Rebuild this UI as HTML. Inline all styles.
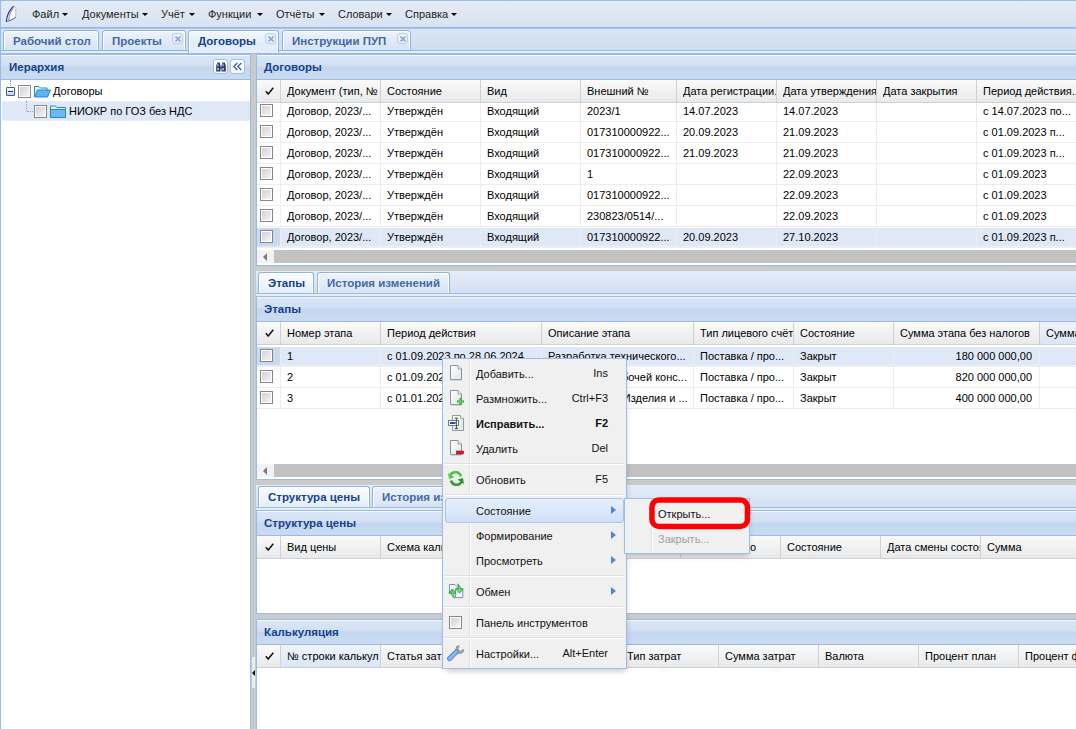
<!DOCTYPE html><html><head><meta charset="utf-8"><style>
*{box-sizing:border-box;margin:0;padding:0}
html,body{width:1076px;height:729px;overflow:hidden;background:#fff;font-family:"Liberation Sans",sans-serif;font-size:11px;color:#000}
div,span{position:absolute}
.t{white-space:nowrap;line-height:13px}
.mi{top:8px;color:#1e1e1e;line-height:13px;white-space:nowrap}
.dd{top:13px;width:0;height:0;border-left:3px solid transparent;border-right:3px solid transparent;border-top:3px solid #000}
.tab{border:1px solid #8db2e3;border-bottom:none;border-radius:3px 3px 0 0;background:linear-gradient(#eef3fa,#d6e3f3);box-shadow:inset 1px 1px 0 #fff,inset -1px 0 0 #fff}
.tt{font-weight:bold;color:#416aa3;font-size:11.5px;line-height:13px;white-space:nowrap}
.cls{width:11px;height:11px;border:1px solid #b9cfec;border-radius:3px;background:#e8f0fa}
.phdr{height:26px;background:linear-gradient(#dbe7f6 0,#d0dff3 11px,#c5d7ef 12px,#cadbf1 100%);border:1px solid #99bbe8;box-shadow:inset 0 1px 0 #f4f8fd}
.pt{font-weight:bold;color:#15428b;font-size:11.5px;line-height:13px;white-space:nowrap}
.ghdr{height:23px;background:linear-gradient(#fafafa,#e8e9eb);border-bottom:1px solid #d0d0d0}
.gc{top:0;height:22px;border-right:1px solid #d0d0d0;overflow:hidden}
.gcs{top:7px;left:7px;white-space:nowrap;line-height:13px}
.rl{height:1px;background:#ededed}
.vl{width:1px;background:#ededed}
.cb{width:13px;height:13px;border:1px solid #868686;background:linear-gradient(135deg,#caced6,#f8f8f9);box-shadow:inset 0 0 0 1px #fff}
.sel{background:#dfe8f6}
.sbar{height:13px;background:#c2c2c2}
.sbtn{width:17px;height:13px;background:#f3f3f3}
.tri{width:0;height:0;border-top:4px solid transparent;border-bottom:4px solid transparent;border-right:4px solid #7b7b7b}
.blue{background:#99bbe8}
.gray{background:#cacaca}
.mt{white-space:nowrap;line-height:13px;color:#111}
.sc{white-space:nowrap;line-height:13px;color:#111;text-align:right}
.msep{height:2px;border-top:1px solid #dcdcdc;border-bottom:1px solid #fff}
.arr{width:0;height:0;border-top:4.5px solid transparent;border-bottom:4.5px solid transparent;border-left:5px solid #4a86da}
</style></head><body>
<div style="left:0;top:0;width:1076px;height:28px;background:linear-gradient(#e4ebf5,#d8e3f1);border-top:1px solid #99bbe8;border-left:1px solid #99bbe8;border-bottom:1px solid #92b6e6"></div>
<svg style="position:absolute;left:0;top:0" width="24" height="28" viewBox="0 0 24 28"><path d="M13.8 6.2 C10 9 7 15 6.2 21.5 C9 21 13 19 15.6 17.3 L15.8 8 C15.6 6.8 14.8 6.2 13.8 6.2 Z" fill="#fff"/><path d="M13.8 6.2 C10 9 7.2 15 6.2 21.5" fill="none" stroke="#1f3585" stroke-width="1.2"/><path d="M13.2 8 C11 10.5 9.2 15 8.6 20.2" fill="none" stroke="#5567a8" stroke-width="0.8"/><path d="M13.9 6.3 C15.2 6.6 15.9 7.6 15.9 9.5 L15.6 17.3" fill="none" stroke="#a9b0c2" stroke-width="0.8"/><path d="M6.2 21.5 C9.5 21 13 19.2 15.6 17.3" fill="none" stroke="#3f4f9a" stroke-width="1"/></svg>
<span class="mi" style="left:32px">Файл</span>
<span class="mi" style="left:82px">Документы</span>
<span class="mi" style="left:161px">Учёт</span>
<span class="mi" style="left:208px">Функции</span>
<span class="mi" style="left:276px">Отчёты</span>
<span class="mi" style="left:338px">Словари</span>
<span class="mi" style="left:405px">Справка</span>
<div class="dd" style="left:62px"></div>
<div class="dd" style="left:142px"></div>
<div class="dd" style="left:189px"></div>
<div class="dd" style="left:257px"></div>
<div class="dd" style="left:319px"></div>
<div class="dd" style="left:386px"></div>
<div class="dd" style="left:451px"></div>
<div style="left:0;top:28px;width:1076px;height:22px;background:linear-gradient(#dbe6f4,#d0ddef);border-left:1px solid #99bbe8"></div>
<div style="left:0;top:28px;width:1076px;height:1px;background:#a9c1ee"></div>
<div class="blue" style="left:0;top:50px;width:1076px;height:1px"></div>
<div style="left:0;top:51px;width:1076px;height:2px;background:#e6eefa;border-left:1px solid #99bbe8"></div>
<div class="blue" style="left:0;top:53px;width:1076px;height:1px"></div>
<div class="tab" style="left:3px;top:30px;width:96px;height:21px;border-bottom:1px solid #8db2e3"></div>
<span class="tt" style="left:13px;top:35px;color:#3f69a5">Рабочий стол</span>
<div class="tab" style="left:102px;top:30px;width:84px;height:21px;border-bottom:1px solid #8db2e3"></div>
<span class="tt" style="left:112px;top:35px;color:#3f69a5">Проекты</span>
<div class="cls" style="left:172px;top:33px"></div>
<svg style="position:absolute;left:175px;top:36px" width="6" height="6"><path d="M0.5 0.5 L5.5 5.5 M5.5 0.5 L0.5 5.5" stroke="#8ba9d4" stroke-width="1.7"/></svg>
<div class="tab" style="left:188px;top:30px;width:91px;height:23px;background:linear-gradient(#f4f8fd,#e2ecf8 60%,#e6eefa)"></div>
<span class="tt" style="left:198px;top:35px;color:#15428b">Договоры</span>
<div class="cls" style="left:265px;top:33px"></div>
<svg style="position:absolute;left:268px;top:36px" width="6" height="6"><path d="M0.5 0.5 L5.5 5.5 M5.5 0.5 L0.5 5.5" stroke="#8ba9d4" stroke-width="1.7"/></svg>
<div class="tab" style="left:282px;top:30px;width:129px;height:21px;border-bottom:1px solid #8db2e3"></div>
<span class="tt" style="left:292px;top:35px;color:#3f69a5">Инструкции ПУП</span>
<div class="cls" style="left:397px;top:33px"></div>
<svg style="position:absolute;left:400px;top:36px" width="6" height="6"><path d="M0.5 0.5 L5.5 5.5 M5.5 0.5 L0.5 5.5" stroke="#8ba9d4" stroke-width="1.7"/></svg>
<div style="left:0;top:54px;width:251px;height:675px;background:#fff;border-left:1px solid #99bbe8;border-right:1px solid #99bbe8"></div>
<div class="phdr" style="left:0;top:54px;width:251px"></div>
<span class="pt" style="left:9px;top:61px">Иерархия</span>
<div style="left:213px;top:59px;width:15px;height:15px;border:1px solid #9fbfe9;border-radius:3px;background:linear-gradient(#ffffff,#f3f7fd)"></div>
<div style="left:230px;top:59px;width:15px;height:15px;border:1px solid #9fbfe9;border-radius:3px;background:linear-gradient(#ffffff,#f3f7fd)"></div>
<svg style="position:absolute;left:216px;top:62px" width="10" height="10" viewBox="0 0 10 10"><path d="M1.2 0.5 H3.8 L4.5 4 V9.5 H0.2 V4 Z M6.2 0.5 H8.8 L9.8 4 V9.5 H5.5 V4 Z" fill="#2a3a63"/><rect x="4.3" y="4.5" width="1.4" height="2.5" fill="#2a3a63"/><rect x="1.2" y="1.5" width="1.4" height="3" fill="#8fb0ea"/><rect x="6.3" y="1.5" width="1.4" height="3" fill="#8fb0ea"/><rect x="1.3" y="6" width="1.5" height="2.2" fill="#b9d0f5"/><rect x="6.3" y="6" width="1.5" height="2.2" fill="#b9d0f5"/></svg>
<svg style="position:absolute;left:233px;top:62px" width="9" height="9" viewBox="0 0 9 9"><path d="M4.3 1 L0.8 4.5 L4.3 8 M8.3 1 L4.8 4.5 L8.3 8" fill="none" stroke="#3b6196" stroke-width="1.3"/></svg>
<div class="sel" style="left:2px;top:101px;width:248px;height:20px"></div>
<div style="left:2px;top:101px;width:248px;height:1px;border-top:1px dotted #f3f6fb"></div>
<div style="left:2px;top:120px;width:248px;height:1px;border-top:1px dotted #f3f6fb"></div>
<div style="left:10px;top:80px;width:1px;height:6px;border-left:1px dotted #a0a0a0"></div>
<div style="left:26px;top:101px;width:1px;height:10px;border-left:1px dotted #a0a0a0"></div>
<div style="left:27px;top:111px;width:6px;height:1px;border-top:1px dotted #a0a0a0"></div>
<div style="left:6px;top:87px;width:9px;height:9px;border:1px solid #3e5d8a;border-radius:1px;background:linear-gradient(#ffffff,#c5d3e6)"></div>
<div style="left:8px;top:91px;width:5px;height:1px;background:#1e3a6a"></div>
<div class="cb" style="left:18px;top:85px"></div>
<svg style="position:absolute;left:34px;top:85px" width="17" height="13" viewBox="0 0 17 13"><path d="M0.5 12 V1.5 H5 L6.5 3 H13 V5" fill="#e6f3fc" stroke="#1e8ad6" stroke-width="1"/><path d="M0.5 12 L3.5 5 H16.5 L13.5 12 Z" fill="#5fb3ee" stroke="#1e8ad6" stroke-width="1"/></svg>
<span class="t" style="left:53px;top:85px">Договоры</span>
<div class="cb" style="left:34px;top:105px"></div>
<svg style="position:absolute;left:50px;top:105px" width="16" height="13" viewBox="0 0 16 13"><path d="M0.5 12.5 V1 H5.5 L7 2.5 H15.5 V12.5 Z" fill="#e6f3fc" stroke="#1e8ad6" stroke-width="1"/><path d="M0.5 12.5 V4.5 H15.5 V12.5 Z" fill="#6ab9f0" stroke="#1e8ad6" stroke-width="1"/></svg>
<span class="t" style="left:69px;top:105px">НИОКР по ГОЗ без НДС</span>
<div class="gray" style="left:251px;top:54px;width:5px;height:675px"></div>
<div style="left:252px;top:657px;width:3px;height:31px;background:#ececec"></div>
<div style="left:252px;top:670px;width:0;height:0;border-top:3px solid transparent;border-bottom:3px solid transparent;border-right:3px solid #111"></div>
<div style="left:256px;top:54px;width:820px;height:675px;background:#fff;border-left:1px solid #99bbe8"></div>
<div class="phdr" style="left:256px;top:54px;width:830px"></div>
<span class="pt" style="left:264px;top:61px">Договоры</span>
<div class="rl" style="left:257px;top:121px;width:819px"></div>
<div class="cb" style="left:260px;top:104px"></div>
<span class="t" style="left:287px;top:105px">Договор, 2023/...</span>
<span class="t" style="left:387px;top:105px">Утверждён</span>
<span class="t" style="left:487px;top:105px">Входящий</span>
<span class="t" style="left:587px;top:105px">2023/1</span>
<span class="t" style="left:683px;top:105px">14.07.2023</span>
<span class="t" style="left:783px;top:105px">14.07.2023</span>
<span class="t" style="left:983px;top:105px">с 14.07.2023 по...</span>
<div class="rl" style="left:257px;top:142px;width:819px"></div>
<div class="cb" style="left:260px;top:125px"></div>
<span class="t" style="left:287px;top:126px">Договор, 2023/...</span>
<span class="t" style="left:387px;top:126px">Утверждён</span>
<span class="t" style="left:487px;top:126px">Входящий</span>
<span class="t" style="left:587px;top:126px">017310000922...</span>
<span class="t" style="left:683px;top:126px">20.09.2023</span>
<span class="t" style="left:783px;top:126px">21.09.2023</span>
<span class="t" style="left:983px;top:126px">с 01.09.2023 п...</span>
<div class="rl" style="left:257px;top:163px;width:819px"></div>
<div class="cb" style="left:260px;top:146px"></div>
<span class="t" style="left:287px;top:147px">Договор, 2023/...</span>
<span class="t" style="left:387px;top:147px">Утверждён</span>
<span class="t" style="left:487px;top:147px">Входящий</span>
<span class="t" style="left:587px;top:147px">017310000922...</span>
<span class="t" style="left:683px;top:147px">21.09.2023</span>
<span class="t" style="left:783px;top:147px">21.09.2023</span>
<span class="t" style="left:983px;top:147px">с 01.09.2023 п...</span>
<div class="rl" style="left:257px;top:184px;width:819px"></div>
<div class="cb" style="left:260px;top:167px"></div>
<span class="t" style="left:287px;top:168px">Договор, 2023/...</span>
<span class="t" style="left:387px;top:168px">Утверждён</span>
<span class="t" style="left:487px;top:168px">Входящий</span>
<span class="t" style="left:587px;top:168px">1</span>
<span class="t" style="left:783px;top:168px">22.09.2023</span>
<span class="t" style="left:983px;top:168px">с 01.09.2023</span>
<div class="rl" style="left:257px;top:205px;width:819px"></div>
<div class="cb" style="left:260px;top:188px"></div>
<span class="t" style="left:287px;top:189px">Договор, 2023/...</span>
<span class="t" style="left:387px;top:189px">Утверждён</span>
<span class="t" style="left:487px;top:189px">Входящий</span>
<span class="t" style="left:587px;top:189px">017310000922...</span>
<span class="t" style="left:783px;top:189px">22.09.2023</span>
<span class="t" style="left:983px;top:189px">с 01.09.2023</span>
<div class="rl" style="left:257px;top:226px;width:819px"></div>
<div class="cb" style="left:260px;top:209px"></div>
<span class="t" style="left:287px;top:210px">Договор, 2023/...</span>
<span class="t" style="left:387px;top:210px">Утверждён</span>
<span class="t" style="left:487px;top:210px">Входящий</span>
<span class="t" style="left:587px;top:210px">230823/0514/...</span>
<span class="t" style="left:783px;top:210px">22.09.2023</span>
<span class="t" style="left:983px;top:210px">с 01.09.2023</span>
<div class="sel" style="left:257px;top:228px;width:819px;height:20px"></div>
<div style="left:257px;top:228px;width:23px;height:20px;background:#c9d9ef"></div>
<div style="left:257px;top:246px;width:819px;height:1px;border-top:1px dotted #f5f8fc"></div>
<div class="rl" style="left:257px;top:247px;width:819px"></div>
<div class="cb" style="left:260px;top:230px"></div>
<span class="t" style="left:287px;top:231px">Договор, 2023/...</span>
<span class="t" style="left:387px;top:231px">Утверждён</span>
<span class="t" style="left:487px;top:231px">Входящий</span>
<span class="t" style="left:587px;top:231px">017310000922...</span>
<span class="t" style="left:683px;top:231px">20.09.2023</span>
<span class="t" style="left:783px;top:231px">27.10.2023</span>
<span class="t" style="left:983px;top:231px">с 01.09.2023 п...</span>
<div class="vl" style="left:280px;top:101px;height:147px"></div>
<div class="vl" style="left:380px;top:101px;height:147px"></div>
<div class="vl" style="left:480px;top:101px;height:147px"></div>
<div class="vl" style="left:580px;top:101px;height:147px"></div>
<div class="vl" style="left:676px;top:101px;height:147px"></div>
<div class="vl" style="left:776px;top:101px;height:147px"></div>
<div class="vl" style="left:876px;top:101px;height:147px"></div>
<div class="vl" style="left:976px;top:101px;height:147px"></div>
<div class="vl" style="left:1076px;top:101px;height:147px"></div>
<div class="ghdr" style="left:257px;top:80px;width:819px"></div>
<svg style="position:absolute;left:265px;top:87px" width="9" height="8" viewBox="0 0 9 8"><path d="M0.8 4.2 L3.2 7 L8.3 0.8" fill="none" stroke="#111" stroke-width="1.5"/></svg>
<div style="left:280px;top:80px;width:1px;height:22px;background:#d0d0d0"></div>
<div style="left:380px;top:80px;width:1px;height:22px;background:#d0d0d0"></div>
<div style="left:287px;top:85px;width:93px;height:14px;overflow:hidden"><span class="t" style="left:0;top:0">Документ (тип, №</span></div>
<div style="left:480px;top:80px;width:1px;height:22px;background:#d0d0d0"></div>
<div style="left:387px;top:85px;width:93px;height:14px;overflow:hidden"><span class="t" style="left:0;top:0">Состояние</span></div>
<div style="left:580px;top:80px;width:1px;height:22px;background:#d0d0d0"></div>
<div style="left:487px;top:85px;width:93px;height:14px;overflow:hidden"><span class="t" style="left:0;top:0">Вид</span></div>
<div style="left:676px;top:80px;width:1px;height:22px;background:#d0d0d0"></div>
<div style="left:587px;top:85px;width:89px;height:14px;overflow:hidden"><span class="t" style="left:0;top:0">Внешний №</span></div>
<div style="left:776px;top:80px;width:1px;height:22px;background:#d0d0d0"></div>
<div style="left:683px;top:85px;width:93px;height:14px;overflow:hidden"><span class="t" style="left:0;top:0">Дата регистрации.</span></div>
<div style="left:876px;top:80px;width:1px;height:22px;background:#d0d0d0"></div>
<div style="left:783px;top:85px;width:93px;height:14px;overflow:hidden"><span class="t" style="left:0;top:0">Дата утверждения</span></div>
<div style="left:976px;top:80px;width:1px;height:22px;background:#d0d0d0"></div>
<div style="left:883px;top:85px;width:93px;height:14px;overflow:hidden"><span class="t" style="left:0;top:0">Дата закрытия</span></div>
<div style="left:1076px;top:80px;width:1px;height:22px;background:#d0d0d0"></div>
<div style="left:983px;top:85px;width:93px;height:14px;overflow:hidden"><span class="t" style="left:0;top:0">Период действия...</span></div>
<div class="sbtn" style="left:257px;top:250px"></div>
<div class="tri" style="left:263px;top:253px"></div>
<div class="sbar" style="left:274px;top:250px;width:802px"></div>
<div class="blue" style="left:256px;top:265px;width:820px;height:1px"></div>
<div class="gray" style="left:256px;top:266px;width:820px;height:5px"></div>
<div style="left:256px;top:271px;width:820px;height:22px;background:linear-gradient(#e4edf9,#d2dff2)"></div>
<div class="tab" style="left:258px;top:272px;width:56px;height:22px;background:linear-gradient(#fbfdff,#e3ecf8);"></div>
<span class="tt" style="left:268px;top:277px;color:#15428b">Этапы</span>
<div class="tab" style="left:317px;top:272px;width:133px;height:22px;"></div>
<span class="tt" style="left:327px;top:277px;color:#416aa3">История изменений</span>
<div class="blue" style="left:256px;top:293px;width:820px;height:1px"></div>
<div style="left:256px;top:294px;width:820px;height:2px;background:#e3ecf8"></div>
<div class="phdr" style="left:256px;top:296px;width:830px"></div>
<span class="pt" style="left:264px;top:303px">Этапы</span>
<div class="sel" style="left:257px;top:347px;width:819px;height:20px"></div>
<div style="left:257px;top:347px;width:23px;height:20px;background:#c9d9ef"></div>
<div style="left:257px;top:365px;width:819px;height:1px;border-top:1px dotted #f5f8fc"></div>
<div class="rl" style="left:257px;top:366px;width:819px"></div>
<div class="cb" style="left:260px;top:349px"></div>
<span class="t" style="left:287px;top:350px">1</span>
<span class="t" style="left:387px;top:350px">с 01.09.2023 по 28.06.2024</span>
<span class="t" style="left:548px;top:350px">Разработка технического...</span>
<span class="t" style="left:700px;top:350px">Поставка / про...</span>
<span class="t" style="left:800px;top:350px">Закрыт</span>
<span class="t" style="left:893px;top:350px;width:139px;text-align:right">180 000 000,00</span>
<div class="rl" style="left:257px;top:387px;width:819px"></div>
<div class="cb" style="left:260px;top:370px"></div>
<span class="t" style="left:287px;top:371px">2</span>
<span class="t" style="left:387px;top:371px">с 01.09.2023 по 28.06.2024</span>
<span class="t" style="left:548px;top:371px">Разработка рабочей конс...</span>
<span class="t" style="left:700px;top:371px">Поставка / про...</span>
<span class="t" style="left:800px;top:371px">Закрыт</span>
<span class="t" style="left:893px;top:371px;width:139px;text-align:right">820 000 000,00</span>
<div class="rl" style="left:257px;top:408px;width:819px"></div>
<div class="cb" style="left:260px;top:391px"></div>
<span class="t" style="left:287px;top:392px">3</span>
<span class="t" style="left:387px;top:392px">с 01.01.2024 по 28.06.2024</span>
<span class="t" style="left:548px;top:392px">Производство Изделия и ...</span>
<span class="t" style="left:700px;top:392px">Поставка / про...</span>
<span class="t" style="left:800px;top:392px">Закрыт</span>
<span class="t" style="left:893px;top:392px;width:139px;text-align:right">400 000 000,00</span>
<div class="vl" style="left:280px;top:346px;height:63px"></div>
<div class="vl" style="left:380px;top:346px;height:63px"></div>
<div class="vl" style="left:541px;top:346px;height:63px"></div>
<div class="vl" style="left:693px;top:346px;height:63px"></div>
<div class="vl" style="left:793px;top:346px;height:63px"></div>
<div class="vl" style="left:893px;top:346px;height:63px"></div>
<div class="vl" style="left:1039px;top:346px;height:63px"></div>
<div class="vl" style="left:1139px;top:346px;height:63px"></div>
<div class="ghdr" style="left:257px;top:322px;width:819px"></div>
<div style="left:1040px;top:322px;width:36px;height:22px;background:linear-gradient(#eef4fc,#d9e6f7)"></div>
<svg style="position:absolute;left:265px;top:329px" width="9" height="8" viewBox="0 0 9 8"><path d="M0.8 4.2 L3.2 7 L8.3 0.8" fill="none" stroke="#111" stroke-width="1.5"/></svg>
<div style="left:280px;top:322px;width:1px;height:22px;background:#d0d0d0"></div>
<div style="left:380px;top:322px;width:1px;height:22px;background:#d0d0d0"></div>
<div style="left:287px;top:327px;width:93px;height:14px;overflow:hidden"><span class="t" style="left:0;top:0">Номер этапа</span></div>
<div style="left:541px;top:322px;width:1px;height:22px;background:#d0d0d0"></div>
<div style="left:387px;top:327px;width:154px;height:14px;overflow:hidden"><span class="t" style="left:0;top:0">Период действия</span></div>
<div style="left:693px;top:322px;width:1px;height:22px;background:#d0d0d0"></div>
<div style="left:548px;top:327px;width:145px;height:14px;overflow:hidden"><span class="t" style="left:0;top:0">Описание этапа</span></div>
<div style="left:793px;top:322px;width:1px;height:22px;background:#d0d0d0"></div>
<div style="left:700px;top:327px;width:93px;height:14px;overflow:hidden"><span class="t" style="left:0;top:0">Тип лицевого счёт</span></div>
<div style="left:893px;top:322px;width:1px;height:22px;background:#d0d0d0"></div>
<div style="left:800px;top:327px;width:93px;height:14px;overflow:hidden"><span class="t" style="left:0;top:0">Состояние</span></div>
<div style="left:1039px;top:322px;width:1px;height:22px;background:#d0d0d0"></div>
<div style="left:900px;top:327px;width:139px;height:14px;overflow:hidden"><span class="t" style="left:0;top:0">Сумма этапа без налогов</span></div>
<div style="left:1139px;top:322px;width:1px;height:22px;background:#d0d0d0"></div>
<div style="left:1046px;top:327px;width:93px;height:14px;overflow:hidden"><span class="t" style="left:0;top:0">Сумма</span></div>
<div class="sbtn" style="left:257px;top:464px"></div>
<div class="tri" style="left:263px;top:467px"></div>
<div class="sbar" style="left:274px;top:464px;width:802px"></div>
<div class="blue" style="left:256px;top:479px;width:820px;height:1px"></div>
<div class="gray" style="left:256px;top:480px;width:820px;height:5px"></div>
<div style="left:256px;top:485px;width:820px;height:22px;background:linear-gradient(#e4edf9,#d2dff2)"></div>
<div class="tab" style="left:258px;top:486px;width:112px;height:22px;background:linear-gradient(#fbfdff,#e3ecf8);"></div>
<span class="tt" style="left:268px;top:491px;color:#15428b">Структура цены</span>
<div class="tab" style="left:372px;top:486px;width:134px;height:22px;"></div>
<span class="tt" style="left:382px;top:491px;color:#416aa3">История изменений</span>
<div class="blue" style="left:256px;top:507px;width:820px;height:1px"></div>
<div style="left:256px;top:508px;width:820px;height:2px;background:#e3ecf8"></div>
<div class="phdr" style="left:256px;top:510px;width:830px"></div>
<span class="pt" style="left:264px;top:517px">Структура цены</span>
<div class="ghdr" style="left:257px;top:536px;width:819px"></div>
<svg style="position:absolute;left:265px;top:543px" width="9" height="8" viewBox="0 0 9 8"><path d="M0.8 4.2 L3.2 7 L8.3 0.8" fill="none" stroke="#111" stroke-width="1.5"/></svg>
<div style="left:280px;top:536px;width:1px;height:22px;background:#d0d0d0"></div>
<div style="left:380px;top:536px;width:1px;height:22px;background:#d0d0d0"></div>
<div style="left:287px;top:541px;width:93px;height:14px;overflow:hidden"><span class="t" style="left:0;top:0">Вид цены</span></div>
<div style="left:480px;top:536px;width:1px;height:22px;background:#d0d0d0"></div>
<div style="left:387px;top:541px;width:93px;height:14px;overflow:hidden"><span class="t" style="left:0;top:0">Схема калькуляции</span></div>
<div style="left:580px;top:536px;width:1px;height:22px;background:#d0d0d0"></div>
<div style="left:680px;top:536px;width:1px;height:22px;background:#d0d0d0"></div>
<div style="left:780px;top:536px;width:1px;height:22px;background:#d0d0d0"></div>
<div style="left:880px;top:536px;width:1px;height:22px;background:#d0d0d0"></div>
<div style="left:787px;top:541px;width:93px;height:14px;overflow:hidden"><span class="t" style="left:0;top:0">Состояние</span></div>
<div style="left:980px;top:536px;width:1px;height:22px;background:#d0d0d0"></div>
<div style="left:887px;top:541px;width:93px;height:14px;overflow:hidden"><span class="t" style="left:0;top:0">Дата смены состояния</span></div>
<div style="left:1080px;top:536px;width:1px;height:22px;background:#d0d0d0"></div>
<div style="left:987px;top:541px;width:93px;height:14px;overflow:hidden"><span class="t" style="left:0;top:0">Сумма</span></div>
<span class="t" style="left:655px;width:101px;top:541px;text-align:right">Согласовано</span>
<div class="blue" style="left:256px;top:613px;width:820px;height:1px"></div>
<div class="gray" style="left:256px;top:614px;width:820px;height:5px"></div>
<div class="phdr" style="left:256px;top:619px;width:830px"></div>
<span class="pt" style="left:264px;top:626px">Калькуляция</span>
<div class="ghdr" style="left:257px;top:645px;width:819px"></div>
<div style="left:281px;top:645px;width:99px;height:22px;background:linear-gradient(#eef4fc,#d9e6f7)"></div>
<svg style="position:absolute;left:265px;top:652px" width="9" height="8" viewBox="0 0 9 8"><path d="M0.8 4.2 L3.2 7 L8.3 0.8" fill="none" stroke="#111" stroke-width="1.5"/></svg>
<div style="left:280px;top:645px;width:1px;height:22px;background:#d0d0d0"></div>
<div style="left:380px;top:645px;width:1px;height:22px;background:#d0d0d0"></div>
<div style="left:287px;top:650px;width:93px;height:14px;overflow:hidden"><span class="t" style="left:0;top:0">№ строки калькул</span></div>
<div style="left:480px;top:645px;width:1px;height:22px;background:#d0d0d0"></div>
<div style="left:387px;top:650px;width:93px;height:14px;overflow:hidden"><span class="t" style="left:0;top:0">Статья затрат</span></div>
<div style="left:620px;top:645px;width:1px;height:22px;background:#d0d0d0"></div>
<div style="left:718px;top:645px;width:1px;height:22px;background:#d0d0d0"></div>
<div style="left:627px;top:650px;width:91px;height:14px;overflow:hidden"><span class="t" style="left:0;top:0">Тип затрат</span></div>
<div style="left:818px;top:645px;width:1px;height:22px;background:#d0d0d0"></div>
<div style="left:725px;top:650px;width:93px;height:14px;overflow:hidden"><span class="t" style="left:0;top:0">Сумма затрат</span></div>
<div style="left:918px;top:645px;width:1px;height:22px;background:#d0d0d0"></div>
<div style="left:825px;top:650px;width:93px;height:14px;overflow:hidden"><span class="t" style="left:0;top:0">Валюта</span></div>
<div style="left:1018px;top:645px;width:1px;height:22px;background:#d0d0d0"></div>
<div style="left:925px;top:650px;width:93px;height:14px;overflow:hidden"><span class="t" style="left:0;top:0">Процент план</span></div>
<div style="left:1118px;top:645px;width:1px;height:22px;background:#d0d0d0"></div>
<div style="left:1025px;top:650px;width:93px;height:14px;overflow:hidden"><span class="t" style="left:0;top:0">Процент факт</span></div>
<div style="left:446px;top:364px;width:180px;height:304px;box-shadow:0 3px 6px rgba(0,0,0,0.22)"></div>
<div style="left:442px;top:358px;width:185px;height:311px;background:#f0f0f0;border:1px solid #9dbde8"></div>
<div style="left:469px;top:359px;width:1px;height:308px;background:#e0e0e0;box-shadow:1px 0 0 #fff"></div>
<div style="left:445px;top:462px;width:179px;height:4px;background:#f0f0f0"></div>
<div style="left:445px;top:463px;width:179px;height:1px;background:#e0e0e0"></div>
<div style="left:445px;top:464px;width:179px;height:1px;background:#fff"></div>
<div style="left:445px;top:493px;width:179px;height:4px;background:#f0f0f0"></div>
<div style="left:445px;top:494px;width:179px;height:1px;background:#e0e0e0"></div>
<div style="left:445px;top:495px;width:179px;height:1px;background:#fff"></div>
<div style="left:445px;top:574px;width:179px;height:4px;background:#f0f0f0"></div>
<div style="left:445px;top:575px;width:179px;height:1px;background:#e0e0e0"></div>
<div style="left:445px;top:576px;width:179px;height:1px;background:#fff"></div>
<div style="left:445px;top:605px;width:179px;height:4px;background:#f0f0f0"></div>
<div style="left:445px;top:606px;width:179px;height:1px;background:#e0e0e0"></div>
<div style="left:445px;top:607px;width:179px;height:1px;background:#fff"></div>
<div style="left:445px;top:636px;width:179px;height:4px;background:#f0f0f0"></div>
<div style="left:445px;top:637px;width:179px;height:1px;background:#e0e0e0"></div>
<div style="left:445px;top:638px;width:179px;height:1px;background:#fff"></div>
<div style="left:445px;top:498px;width:179px;height:25px;border:1px solid #a9c7ee;border-radius:3px;background:linear-gradient(#e6f0fb,#cfe0f6)"></div>
<span class="mt" style="left:476px;top:368px;">Добавить...</span>
<span class="sc" style="left:540px;width:68px;top:367px;">Ins</span>
<span class="mt" style="left:476px;top:393px;">Размножить...</span>
<span class="sc" style="left:540px;width:68px;top:392px;">Ctrl+F3</span>
<span class="mt" style="left:476px;top:418px;font-weight:bold;">Исправить...</span>
<span class="sc" style="left:540px;width:68px;top:417px;font-weight:bold;">F2</span>
<span class="mt" style="left:476px;top:443px;">Удалить</span>
<span class="sc" style="left:540px;width:68px;top:442px;">Del</span>
<span class="mt" style="left:476px;top:474px;">Обновить</span>
<span class="sc" style="left:540px;width:68px;top:473px;">F5</span>
<span class="mt" style="left:476px;top:505px;">Состояние</span>
<span class="mt" style="left:476px;top:530px;">Формирование</span>
<span class="mt" style="left:476px;top:555px;">Просмотреть</span>
<span class="mt" style="left:476px;top:586px;">Обмен</span>
<span class="mt" style="left:476px;top:617px;">Панель инструментов</span>
<span class="mt" style="left:476px;top:648px;">Настройки...</span>
<span class="sc" style="left:540px;width:68px;top:647px;">Alt+Enter</span>
<div class="arr" style="left:611px;top:506px"></div>
<div class="arr" style="left:611px;top:531px"></div>
<div class="arr" style="left:611px;top:556px"></div>
<div class="arr" style="left:611px;top:587px"></div>
<svg style="position:absolute;left:448px;top:364px" width="16" height="17" viewBox="0 0 16 17"><defs><linearGradient id="pg" x1="0" y1="0" x2="1" y2="1"><stop offset="0" stop-color="#ffffff"/><stop offset="1" stop-color="#dfe3e6"/></linearGradient></defs><path d="M2.5 1.5 H10 L13.5 5 V15.5 H2.5 Z" fill="url(#pg)" stroke="#8a9298" stroke-width="1"/><path d="M10 1.5 V5 H13.5" fill="#eef0f2" stroke="#9aa2a8" stroke-width="1"/><path d="M3 16.3 H13.5" stroke="#c8ccd0" stroke-width="1"/></svg>
<svg style="position:absolute;left:448px;top:389px" width="16" height="17" viewBox="0 0 16 17"><defs><linearGradient id="pg" x1="0" y1="0" x2="1" y2="1"><stop offset="0" stop-color="#ffffff"/><stop offset="1" stop-color="#dfe3e6"/></linearGradient></defs><path d="M2.5 1.5 H10 L13.5 5 V15.5 H2.5 Z" fill="url(#pg)" stroke="#8a9298" stroke-width="1"/><path d="M10 1.5 V5 H13.5" fill="#eef0f2" stroke="#9aa2a8" stroke-width="1"/><path d="M3 16.3 H13.5" stroke="#c8ccd0" stroke-width="1"/><rect x="10.5" y="9.5" width="5" height="6" fill="none"/><path d="M12.5 9 V16 M9 12.5 H16" stroke="#2aa52a" stroke-width="2.2"/><path d="M12.5 10 V15 M10 12.5 H15" stroke="#6ee06e" stroke-width="0.8"/></svg>
<svg style="position:absolute;left:448px;top:439px" width="16" height="17" viewBox="0 0 16 17"><defs><linearGradient id="pg" x1="0" y1="0" x2="1" y2="1"><stop offset="0" stop-color="#ffffff"/><stop offset="1" stop-color="#dfe3e6"/></linearGradient></defs><path d="M2.5 1.5 H10 L13.5 5 V15.5 H2.5 Z" fill="url(#pg)" stroke="#8a9298" stroke-width="1"/><path d="M10 1.5 V5 H13.5" fill="#eef0f2" stroke="#9aa2a8" stroke-width="1"/><path d="M3 16.3 H13.5" stroke="#c8ccd0" stroke-width="1"/><rect x="8.5" y="12" width="7" height="3" fill="#d42020" stroke="#a01010" stroke-width="0.6"/></svg>
<svg style="position:absolute;left:447px;top:414px" width="18" height="18" viewBox="0 0 18 18"><defs><linearGradient id="eg" x1="0" y1="0" x2="1" y2="1"><stop offset="0" stop-color="#f2fbfb"/><stop offset="1" stop-color="#dbe8ea"/></linearGradient></defs><path d="M5.5 1.5 H13.5 L16.5 4.5 V16.5 H5.5 Z" fill="url(#eg)" stroke="#8a9c9e" stroke-width="1"/><path d="M13.5 1.5 V4.5 H16.5" fill="#fff" stroke="#8a9c9e" stroke-width="0.8"/><rect x="1.5" y="6.5" width="10" height="5" fill="#fcfcfc" stroke="#7c7c7c" stroke-width="1"/><rect x="3" y="8" width="5.5" height="2" fill="#1d48d6"/><path d="M9.4 4.5 V14.5 M7.8 4.2 H11 M7.8 14.6 H11" stroke="#3c3c3c" stroke-width="0.9"/></svg>
<svg style="position:absolute;left:448px;top:471px" width="16" height="15" viewBox="0 0 16 15"><path d="M13 5.5 C12 2.5 9.5 1 7 1.2 C4.5 1.4 2.8 3 2.2 4.6" fill="none" stroke="#4fc34f" stroke-width="2.6"/><path d="M0 2 L1 8 L6.5 6.5 Z" fill="#52c852"/><path d="M3 9.5 C4 12.5 6.5 14 9 13.8 C11.5 13.6 13.2 12 13.8 10.4" fill="none" stroke="#2f9e2f" stroke-width="2.6"/><path d="M16 13 L15 7 L9.5 8.5 Z" fill="#2a952a"/></svg>
<svg style="position:absolute;left:447px;top:582px" width="18" height="18" viewBox="0 0 18 18"><defs><linearGradient id="xg" x1="0" y1="0" x2="1" y2="1"><stop offset="0" stop-color="#27a327"/><stop offset="0.6" stop-color="#6ee86e"/><stop offset="1" stop-color="#1e8a1e"/></linearGradient></defs><path d="M2.5 2.5 H8 L10 4.5 V11.5 H2.5 Z" fill="#f8fbff" stroke="#7b8fba" stroke-width="1"/><path d="M8.5 6.5 H15.8 V15.6 H8.5 Z" fill="#eef5fc" stroke="#7b8fba" stroke-width="1"/><path d="M5.5 6.8 L1.8 10.8 H4.3 C4.5 13.5 5.5 15.2 7.8 16.2 C6.8 14.8 6.6 13 6.7 10.8 H9.2 Z" fill="url(#xg)" stroke="#1b8a1b" stroke-width="0.5"/><path d="M12.5 11.2 L16.2 7.2 H13.7 C13.5 4.5 12.5 2.8 10.2 1.8 C11.2 3.2 11.4 5 11.3 7.2 H8.8 Z" fill="url(#xg)" stroke="#1b8a1b" stroke-width="0.5"/></svg>
<div class="cb" style="left:449px;top:616px"></div>
<svg style="position:absolute;left:447px;top:644px" width="18" height="18" viewBox="0 0 18 18"><circle cx="12.8" cy="5.4" r="4" fill="#a3a9af" stroke="#7d848b" stroke-width="0.8"/><path d="M12.6 5.6 L17.8 0.4 L17.8 5.2 Z M12.6 5.6 L12.2 0 L17.8 0.4 Z" fill="#f0f0f0"/><circle cx="13.2" cy="5" r="1.6" fill="#f0f0f0"/><path d="M2.6 14.6 L9.4 7.8" stroke="#4f83d6" stroke-width="5" stroke-linecap="round"/><path d="M2.6 14.6 L9.4 7.8" stroke="#8fb6ef" stroke-width="3" stroke-linecap="round"/></svg>
<div style="left:628px;top:504px;width:120px;height:49px;box-shadow:0 3px 6px rgba(0,0,0,0.22)"></div>
<div style="left:624px;top:498px;width:126px;height:56px;background:#f0f0f0;border:1px solid #9dbde8"></div>
<div style="left:651px;top:499px;width:1px;height:54px;background:#e0e0e0;box-shadow:1px 0 0 #fff"></div>
<span class="mt" style="left:658px;top:508px">Открыть...</span>
<span class="mt" style="left:658px;top:533px;color:#a0a0a0">Закрыть...</span>
<svg style="position:absolute;left:645px;top:492px" width="112" height="44"><rect x="6.95" y="7.95" width="95.5" height="26.5" rx="7" ry="7" fill="none" stroke="#ff0000" stroke-width="5.5"/></svg>
</body></html>
